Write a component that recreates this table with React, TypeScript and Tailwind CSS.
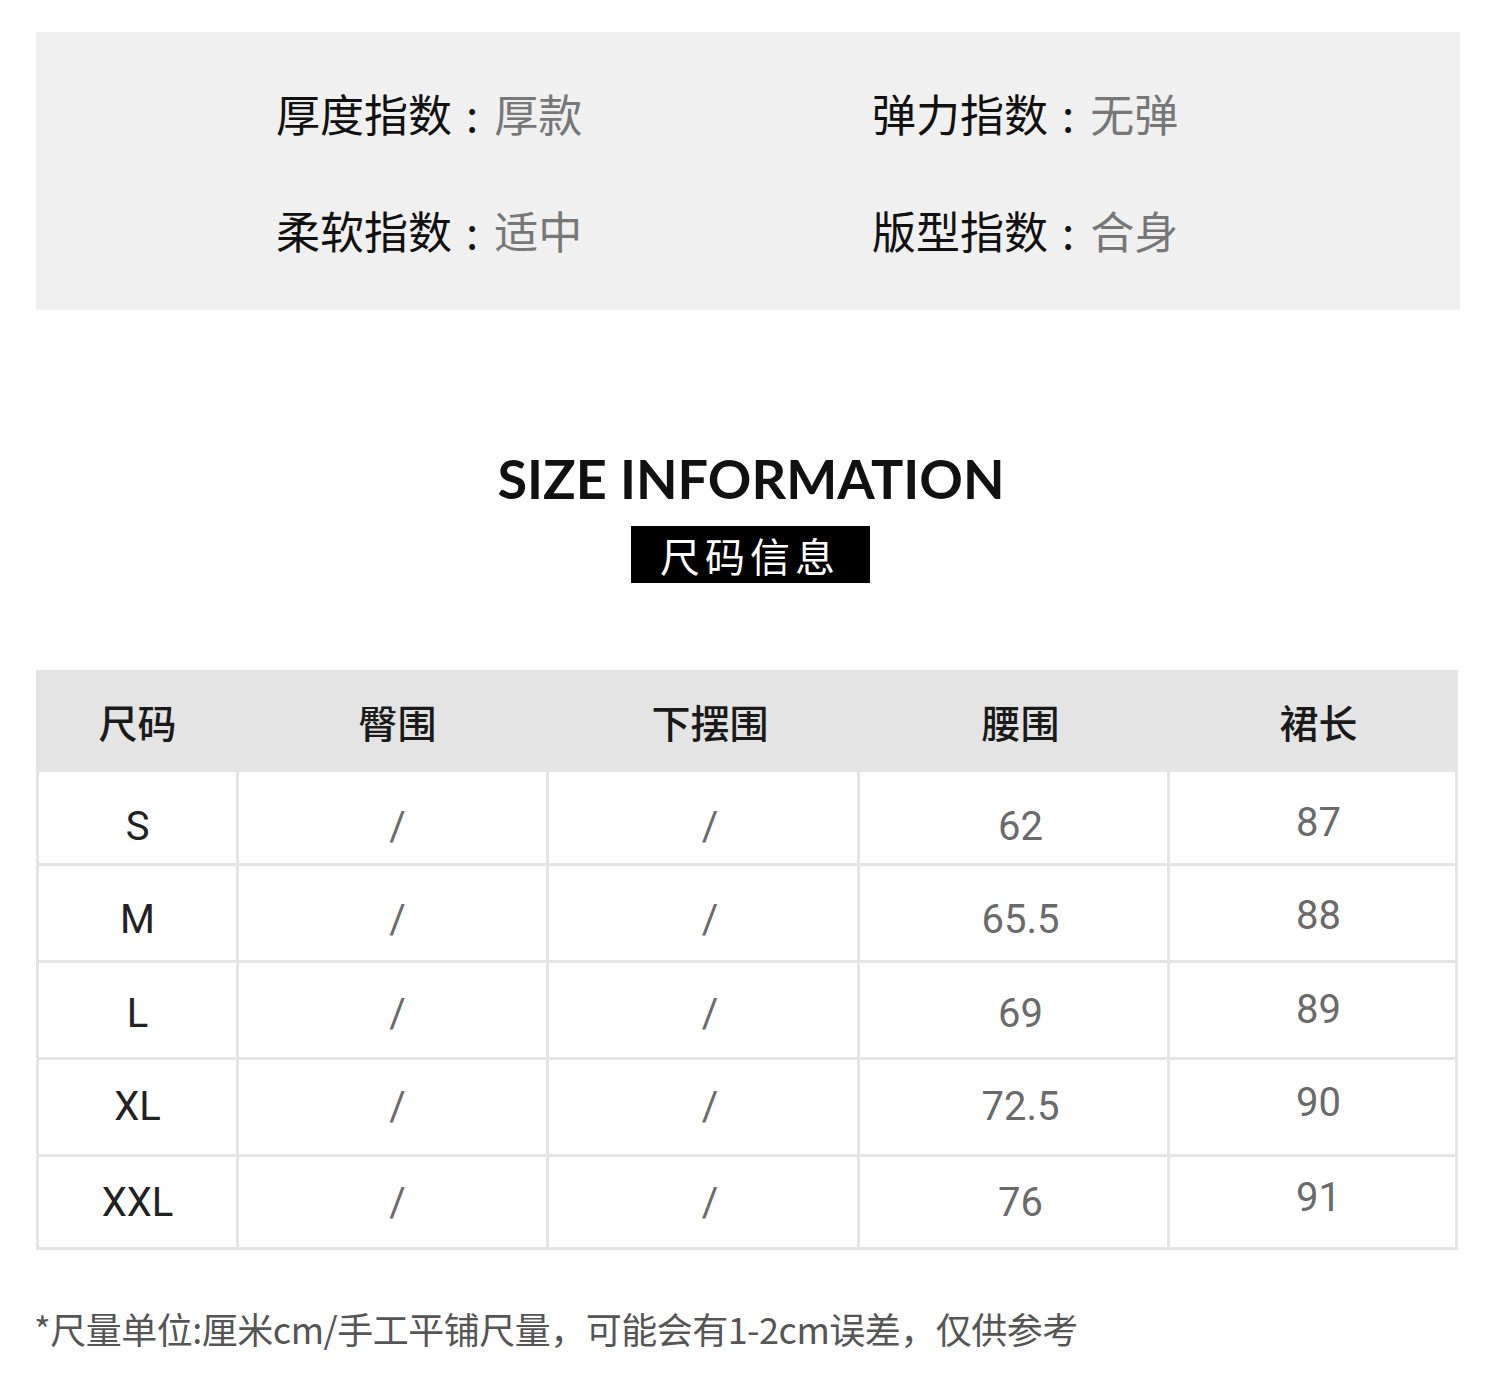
const cjk = "font-['Noto_Sans_CJK_SC',sans-serif]";

// 面料指数
const indices = [
  ['厚度指数', '厚款', '弹力指数', '无弹'],
  ['柔软指数', '适中', '版型指数', '合身'],
];

const headers = ['尺码', '臀围', '下摆围', '腰围', '裙长'];

const rows = [
  ['S', '/', '/', '62', '87'],
  ['M', '/', '/', '65.5', '88'],
  ['L', '/', '/', '69', '89'],
  ['XL', '/', '/', '72.5', '90'],
  ['XXL', '/', '/', '76', '91'],
];

const cols = 'grid grid-cols-[197px_307px_308px_307px_285px] gap-x-[3px]';
// 文字略偏右
const shift = ['', 'pl-[10px]', 'pl-[14px]', 'pl-[14px]', 'pl-[12px]'];
// 每行高度和文字的上下偏移
const rowH = ['h-[91px]', 'h-[94px]', 'h-[94px]', 'h-[94px]', 'h-[90px]'];
const rowPad = ['pt-[18px]', 'pt-[14px]', 'pt-[8px]', 'pt-[0px]', 'pt-[2px]'];
const lastPad = ['pt-[10px]', 'pt-[6px]', 'pt-[0px]', 'pb-[8px]', 'pb-[8px]'];

function IndexItem({ label, value }: { label: string; value: string }) {
  return (
    <div className="flex items-center text-[44px] leading-none">
      <span className="text-[#111]">{label}</span>
      <span className="text-[#111] pl-[14px] pr-[16px]">:</span>
      <span className="text-[#777]">{value}</span>
    </div>
  );
}

export default function App() {
  return (
    <div className={`w-[1500px] h-[1389px] bg-white ${cjk}`}>
      <div className="pt-[32px] pl-[36px]">
        <div className="w-[1424px] bg-[#f0f0f0] h-[278px] flex flex-col justify-center gap-[73px] pl-[240px]">
          {indices.map((r, i) => (
            <div key={i} className="grid grid-cols-[596px_1fr]">
              <IndexItem label={r[0]} value={r[1]} />
              <IndexItem label={r[2]} value={r[3]} />
            </div>
          ))}
        </div>
      </div>

      <div className="flex flex-col items-center pt-[142px]">
        <h2 className="font-['Lato',sans-serif] font-bold text-[54px] leading-none text-[#111] pl-[2px]">
          SIZE INFORMATION
        </h2>
        <div className="mt-[20px] w-[239px] h-[57px] bg-black text-white flex items-center justify-center text-[40px] tracking-[5px] leading-none">
          尺码信息
        </div>
      </div>

      <div className="mx-[36px] mt-[87px] w-[1422px] bg-[#e4e4e4] px-[3px] pb-[3px]">
        <div className={`${cols} h-[102px] items-center`}>
          {headers.map((h, j) => (
            <div key={h} className={`text-center text-[39px] font-medium text-[#1a1a1a] leading-none ${shift[j]}`}>
              {h}
            </div>
          ))}
        </div>
        <div className="flex flex-col gap-y-[3px]">
          {rows.map((r, i) => (
            <div key={i} className={`${cols} ${rowH[i]}`}>
              {r.map((c, j) => (
                <div
                  key={j}
                  className={`bg-white flex items-center justify-center font-['Roboto',sans-serif] text-[40px] leading-none ${
                    j === 0 ? 'text-[#222]' : 'text-[#6a6a6a]'
                  } ${j === 4 ? lastPad[i] : rowPad[i]} ${shift[j]}`}
                >
                  {c}
                </div>
              ))}
            </div>
          ))}
        </div>
      </div>

      <p className="ml-[34px] mt-[60px] text-[36px] leading-none text-[#555] tracking-[-0.5px]">
        *尺量单位:厘米cm/手工平铺尺量，可能会有1-2cm误差，仅供参考
      </p>
    </div>
  );
}
